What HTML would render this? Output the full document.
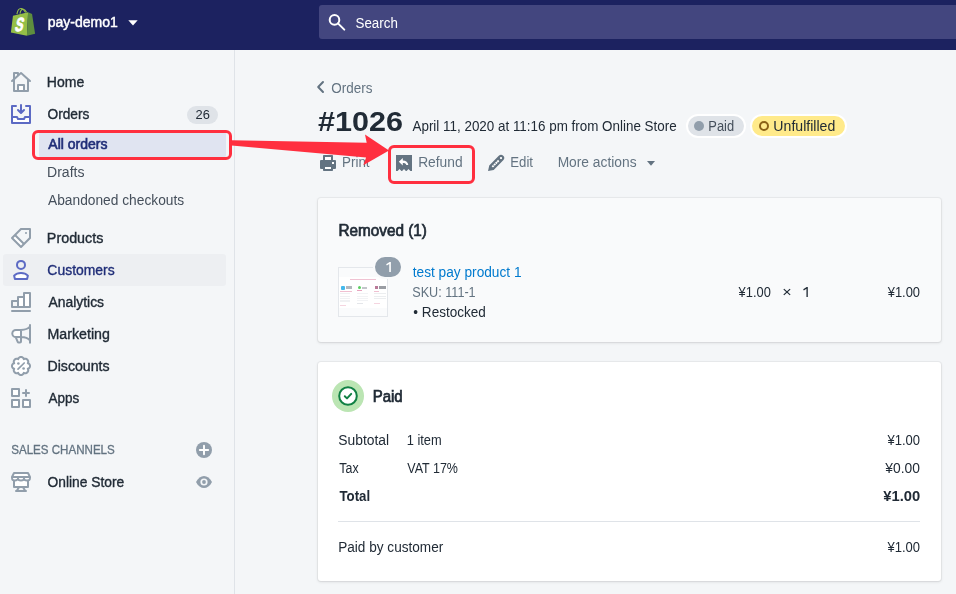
<!DOCTYPE html>
<html><head><meta charset="utf-8">
<style>
*{box-sizing:border-box;margin:0;padding:0}
html,body{width:956px;height:594px;overflow:hidden;background:#f4f6f8;font-family:"Liberation Sans",sans-serif;color:#212b36}
.a{position:absolute}
#top{position:absolute;left:0;top:0;width:956px;height:49.5px;background:#1c2260}
#search{position:absolute;left:319px;top:5px;width:660px;height:34px;background:#43467f;border-radius:3px}
#sideline{position:absolute;left:234px;top:50px;width:1px;height:544px;background:#dfe3e8}
.t{position:absolute;white-space:nowrap;line-height:1;transform-origin:0 0}
.card{position:absolute;left:318px;width:623px;background:#fff;border-radius:3px;box-shadow:0 0 0 1px rgba(63,63,68,.05),0 1px 3px 0 rgba(63,63,68,.15)}
svg{position:absolute;overflow:visible}
.ic{width:20px;height:20px;left:11px}
</style></head><body>
<div id="top"><div id="search"></div></div>
<div id="sideline"></div>

<!-- shopify bag -->
<svg class="a" style="left:0;top:0" width="50" height="50" viewBox="0 0 50 50">
 <path d="M16.9 14.2 C17.6 10.2 19.6 8.3 21.4 8.6 C23.2 8.9 24.6 10.6 25.6 12.4" fill="none" stroke="#95bf47" stroke-width="1.1"/>
 <path d="M20.0 13.6 C20.4 10.6 21.8 8.9 23.4 9.2 C24.8 9.5 25.8 10.8 26.6 12.2" fill="none" stroke="#95bf47" stroke-width="1.1"/>
 <path d="M12.97 15.8 L28.1 12.2 L26.9 35.8 L10.85 32.5 Z" fill="#95bf47"/>
 <path d="M28.1 12.2 L32.06 14 L35.1 33.7 L26.9 35.8 Z" fill="#5e8e3e"/>
 <text x="0" y="0" font-family="Liberation Sans, sans-serif" font-weight="700" font-size="19" fill="#fff" stroke="#fff" stroke-width="0.9" transform="translate(14.200 31.400) skewX(-13) scale(0.640 1)">S</text>
</svg>
<!-- store caret -->
<svg class="a" style="left:128px;top:19.5px" width="10" height="6" viewBox="0 0 10 6"><path d="M0.3 0.3h9.4L5 5.6z" fill="#fff"/></svg>
<!-- search icon -->
<svg class="a" style="left:326px;top:11px" width="22" height="22" viewBox="0 0 22 22"><circle cx="8.5" cy="8.9" r="4.8" fill="none" stroke="#fff" stroke-width="2"/><path d="M12 12.4 L18.3 18.6" stroke="#fff" stroke-width="2" stroke-linecap="round"/></svg>

<!-- nav backgrounds -->
<div class="a" style="left:39px;top:130px;width:187px;height:28px;background:#e0e4f1;border-radius:3px"></div>
<div class="a" style="left:3px;top:254px;width:223px;height:32px;background:#edeff2;border-radius:3px"></div>
<div class="a" style="left:187px;top:106px;width:31px;height:18px;background:#dfe3e8;border-radius:9px"></div>

<!-- NAV ICONS -->
<svg class="ic" style="top:72px" viewBox="0 0 20 20"><path fill="#fff" d="M8 14h4v4H8z"/><path fill="#919eab" fill-rule="evenodd" d="M19.664 8.252l-9-8a1 1 0 0 0-1.328 0L8 1.44V1a1 1 0 0 0-1-1H3a1 1 0 0 0-1 1v5.773L.336 8.252a1.001 1.001 0 0 0 1.328 1.496L2 9.449V19a1 1 0 0 0 1 1h14a1 1 0 0 0 1-1V9.449l.336.299a.997.997 0 0 0 1.411-.083 1.001 1.001 0 0 0-.083-1.413zM16 18h-2v-5a1 1 0 0 0-1-1H7a1 1 0 0 0-1 1v5H4V7.671l6-5.333 6 5.333V18zm-8 0v-4h4v4H8zM4 2h2v1.218L4 4.996V2z"/></svg>

<svg class="ic" style="top:104px" viewBox="0 0 20 20"><path fill="#fff" d="M2 18v-4h3.382l.723 1.447c.17.339.516.553.895.553h6c.379 0 .725-.214.895-.553L14.618 14H18v4H2z"/><path fill="#5c6ac4" fill-rule="evenodd" d="M2 18v-4h3.382l.723 1.447c.17.339.516.553.895.553h6c.379 0 .725-.214.895-.553L14.618 14H18v4H2zM19 1a1 1 0 0 1 1 1v17a1 1 0 0 1-1 1H1a1 1 0 0 1-1-1V2a1 1 0 0 1 1-1h4a1 1 0 0 1 0 2H2v9h4c.379 0 .725.214.895.553L7.618 14h4.764l.723-1.447c.17-.339.516-.553.895-.553h4V3h-3a1 1 0 0 1 0-2h4zM6.293 6.707a.999.999 0 1 1 1.414-1.414L9 6.586V1a1 1 0 0 1 2 0v5.586l1.293-1.293a.999.999 0 1 1 1.414 1.414l-3 3a.997.997 0 0 1-1.414 0l-3-3z"/></svg>

<svg class="ic" style="top:228px" viewBox="0 0 20 20"><path fill="#fff" d="M10 17.586L2.414 10 4 8.414 11.586 16z"/><path fill="#919eab" fill-rule="evenodd" d="M19 0h-9c-.265 0-.52.106-.707.293l-9 9a.999.999 0 0 0 0 1.414l9 9a.997.997 0 0 0 1.414 0l9-9A.997.997 0 0 0 20 10V1a1 1 0 0 0-1-1zm-9 17.586L2.414 10 4 8.414 11.586 16 10 17.586zm8-8l-5 5L5.414 7l5-5H18v7.586zM15 6a1 1 0 1 0 0-2 1 1 0 0 0 0 2"/></svg>

<svg class="ic" style="top:260px" viewBox="0 0 20 20"><circle cx="10" cy="4.9" r="4" fill="none" stroke="#5c6ac4" stroke-width="2"/><path d="M3.1 15.6 C4.6 14.1 7 13 10 13 C13 13 15.4 14.1 16.9 15.6 L16.1 19 H3.9 Z" fill="#fff" stroke="#5c6ac4" stroke-width="2" stroke-linejoin="round"/></svg>

<svg class="ic" style="top:292px" viewBox="0 0 20 20"><path d="M7 5h6v10H7z M13 1h6v14h-6z" fill="#fff"/><path d="M1 9h6v6H1z M7 5h6v10H7z M13 1h6v14h-6z" fill="none" stroke="#919eab" stroke-width="2" stroke-linejoin="round"/><rect x="0" y="18" width="20" height="2" rx="1" fill="#919eab"/></svg>

<svg class="ic" style="top:324px" viewBox="0 0 20 20"><path d="M10 5.9 H4.9 a3.6 3.6 0 0 0 0 7.200 H10 z" fill="#fff"/><path d="M19 1 V18.800 M19 2.500 C17.500 4.400 14 5.900 10 5.900 H4.900 a3.600 3.600 0 0 0 0 7.200 H10 C14 13.100 17.500 14.600 19 16.500 M10 5.900 V17.400 a1 1 0 0 1 -1 1 H7.600 a1 1 0 0 1 -0.900 -0.600 L4.700 13.100" fill="none" stroke="#919eab" stroke-width="2" stroke-linecap="round" stroke-linejoin="round"/></svg>

<svg class="ic" style="top:356px" viewBox="0 0 20 20"><path d="M10.00 1.00 L10.59 1.06 L11.15 1.23 L11.69 1.52 L12.17 1.92 L12.57 2.43 L12.81 3.21 L13.53 2.83 L14.18 2.76 L14.80 2.81 L15.38 2.99 L15.91 3.26 L16.36 3.64 L16.74 4.09 L17.01 4.62 L17.19 5.20 L17.24 5.82 L17.17 6.47 L16.79 7.19 L17.57 7.43 L18.08 7.83 L18.48 8.31 L18.77 8.85 L18.94 9.41 L19.00 10.00 L18.94 10.59 L18.77 11.15 L18.48 11.69 L18.08 12.17 L17.57 12.57 L16.79 12.81 L17.17 13.53 L17.24 14.18 L17.19 14.80 L17.01 15.38 L16.74 15.91 L16.36 16.36 L15.91 16.74 L15.38 17.01 L14.80 17.19 L14.18 17.24 L13.53 17.17 L12.81 16.79 L12.57 17.57 L12.17 18.08 L11.69 18.48 L11.15 18.77 L10.59 18.94 L10.00 19.00 L9.41 18.94 L8.85 18.77 L8.31 18.48 L7.83 18.08 L7.43 17.57 L7.19 16.79 L6.47 17.17 L5.82 17.24 L5.20 17.19 L4.62 17.01 L4.09 16.74 L3.64 16.36 L3.26 15.91 L2.99 15.38 L2.81 14.80 L2.76 14.18 L2.83 13.53 L3.21 12.81 L2.43 12.57 L1.92 12.17 L1.52 11.69 L1.23 11.15 L1.06 10.59 L1.00 10.00 L1.06 9.41 L1.23 8.85 L1.52 8.31 L1.92 7.83 L2.43 7.43 L3.21 7.19 L2.83 6.47 L2.76 5.82 L2.81 5.20 L2.99 4.62 L3.26 4.09 L3.64 3.64 L4.09 3.26 L4.62 2.99 L5.20 2.81 L5.82 2.76 L6.47 2.83 L7.19 3.21 L7.43 2.43 L7.83 1.92 L8.31 1.52 L8.85 1.23 L9.41 1.06Z" fill="#fff" stroke="#919eab" stroke-width="2" stroke-linejoin="round"/><path d="M7 13.200 L13.200 7" stroke="#919eab" stroke-width="1.700" stroke-linecap="round"/><circle cx="7.400" cy="7.500" r="1.300" fill="#919eab"/><circle cx="12.600" cy="12.500" r="1.300" fill="#919eab"/></svg>

<svg class="ic" style="top:388px" viewBox="0 0 20 20"><path d="M1 1h7v7H1z M1 12h7v7H1z M12 12h7v7h-7z" fill="#fff" stroke="#919eab" stroke-width="2" stroke-linejoin="round"/><path d="M12 5 H18 M15 2 V8" stroke="#919eab" stroke-width="2" stroke-linecap="round"/></svg>

<svg class="ic" style="top:472px" viewBox="0 0 20 20"><path d="M4 9H16V14H4Z" fill="#fff"/><path d="M3 8.500V15H17V8.500M7.800 15.500L6 18.500M12.200 15.500L14 18.500" fill="none" stroke="#919eab" stroke-width="2" stroke-linejoin="round"/><path d="M1 5V6.200a3 2.300 0 0 0 6 0a3 2.300 0 0 0 6 0a3 2.300 0 0 0 6 0V5" fill="#fff" stroke="#919eab" stroke-width="1.800" stroke-linejoin="round"/><path d="M3 1H17L19 5H1Z" fill="#fff" stroke="#919eab" stroke-width="2" stroke-linejoin="round"/><rect x="4" y="18" width="12" height="2" rx="1" fill="#919eab"/></svg>

<!-- plus circle & eye -->
<svg class="a" style="left:196px;top:442px" width="16" height="16" viewBox="0 0 16 16"><circle cx="8" cy="8" r="8" fill="#919eab"/><path d="M8 3.800v8.400M3.800 8h8.400" stroke="#fff" stroke-width="1.900" stroke-linecap="round"/></svg>
<svg class="a" style="left:196px;top:476px" width="16" height="12" viewBox="0 0 16 12"><path d="M0 6 C2 2 5 0 8 0 C11 0 14 2 16 6 C14 10 11 12 8 12 C5 12 2 10 0 6 Z" fill="#919eab"/><circle cx="8" cy="6" r="3.600" fill="#f4f6f8"/><circle cx="8" cy="6" r="1.900" fill="#919eab"/></svg>

<!-- breadcrumb chevron -->
<svg class="a" style="left:315px;top:80px" width="12" height="14" viewBox="0 0 12 14"><path d="M8 2 L3.200 7 L8 12" fill="none" stroke="#637381" stroke-width="2" stroke-linecap="round" stroke-linejoin="round"/></svg>

<!-- badges -->
<div class="a" style="left:685.500px;top:114px;width:60px;height:24px;border-radius:12px;background:#dfe3e8;border:2px solid #fff"></div>
<div class="a" style="left:694px;top:121px;width:10px;height:10px;border-radius:5px;background:#919eab"></div>
<div class="a" style="left:750px;top:114px;width:97px;height:24px;border-radius:12px;background:#ffea8a;border:2px solid #fff"></div>
<div class="a" style="left:758.500px;top:121px;width:10px;height:10px;border-radius:5px;border:2px solid #8a6116"></div>

<!-- action icons -->
<svg class="a" style="left:318px;top:153px" width="20" height="20" viewBox="0 0 20 20"><path fill="#fff" d="M7 4h6v3H7zM7 14h6v2H7zM14 9h2v2h-2z"/><path fill="#637381" fill-rule="evenodd" d="M15 7h2a1 1 0 0 1 1 1v7a1 1 0 0 1-1 1h-2v1.200a.800.800 0 0 1-.800.800H5.800a.800.800 0 0 1-.800-.800V16H3a1 1 0 0 1-1-1V8a1 1 0 0 1 1-1h2V2.800a.800.800 0 0 1 .800-.800h8.400a.800.800 0 0 1 .800.800ZM7 4h6v3H7zM7 14h6v2H7zM14 9h2v2h-2z"/></svg>

<svg class="a" style="left:394px;top:153px" width="20" height="20" viewBox="0 0 20 20"><path fill="#637381" d="M2 2H18V18H16.400L14.500 16.100L12.600 18H11.900L10 16.100L8.100 18H7.400L5.500 16.100L3.600 18H2Z"/><path fill="#fff" d="M8.800 5 L4.800 8.800 L8.800 12.600 V10.100 C10.800 10.100 12 10.600 12.300 12 H14.300 C14.100 9.300 12 7.600 8.800 7.500 Z"/></svg>

<svg class="a" style="left:486px;top:153px" width="20" height="20" viewBox="0 0 20 20"><path d="M2.040 17.900 L3.250 12.550 L12.770 2.870 A3.150 3.150 0 0 1 17.230 7.330 L7.700 16.900 Z" fill="#637381"/><path d="M6.300 13.900 L12.700 7.500" stroke="#fff" stroke-width="1.900" stroke-dasharray="1.900 0.500"/><circle cx="15" cy="5.080" r="1.150" fill="#fff"/></svg>

<svg class="a" style="left:647px;top:161px" width="8" height="5" viewBox="0 0 8 5"><path d="M0 0h8L4 4.700z" fill="#637381"/></svg>

<!-- cards -->
<div class="card" style="top:198px;height:144px;background:#f9fafb"></div>
<div class="card" style="top:362px;height:219px"></div>

<!-- thumbnail -->
<div class="a" style="left:338px;top:267px;width:50px;height:50px;border:1px solid #e4e7eb;background:#fafbfc"></div>
<div class="a" style="left:339px;top:277px;width:48px;height:31px;background:#fff"></div>
<div class="a" style="left:350px;top:279px;width:26px;height:1px;background:#f0c3d3"></div>
<div class="a" style="left:340.500px;top:285.500px;width:4px;height:4px;background:#45b9ec;border-radius:1px"></div>
<div class="a" style="left:345.500px;top:286px;width:6.500px;height:3px;background:#b4b8be"></div>
<div class="a" style="left:358px;top:286px;width:3px;height:3px;background:#5bcf61;border-radius:1.500px"></div>
<div class="a" style="left:362px;top:286.500px;width:5px;height:2px;background:#c3c6ca"></div>
<div class="a" style="left:374.500px;top:286px;width:3px;height:3px;background:#b97a98"></div>
<div class="a" style="left:378.500px;top:286px;width:7.500px;height:2.500px;background:#9a9da3"></div>
<div class="a" style="left:340px;top:291px;width:12px;height:1px;background:#f0c0d1"></div>
<div class="a" style="left:357px;top:290px;width:5px;height:1px;background:#e8a4be"></div>
<div class="a" style="left:374px;top:291px;width:4.500px;height:1px;background:#f0c0d1"></div>
<div class="a" style="left:340px;top:293px;width:10px;height:9px;background:repeating-linear-gradient(#f0f1f3 0 1px,#fff 1px 2.500px)"></div>
<div class="a" style="left:357px;top:292.500px;width:11px;height:8px;background:repeating-linear-gradient(#f2f3f5 0 1px,#fff 1px 2.500px)"></div>
<div class="a" style="left:374px;top:293px;width:12px;height:7px;background:repeating-linear-gradient(#eceef0 0 1px,#fff 1px 2.500px)"></div>
<div class="a" style="left:340px;top:304.500px;width:6px;height:1px;background:#f5d5e0"></div>
<div class="a" style="left:357px;top:302.500px;width:6px;height:1px;background:#e4e6ea"></div>
<div class="a" style="left:374px;top:303px;width:6px;height:1px;background:#f5d5e0"></div>
<!-- qty badge -->
<div class="a" style="left:373px;top:255px;width:30px;height:24px;border-radius:12px;background:#919eab;border:2px solid #f9fafb"></div>

<!-- paid circle -->
<div class="a" style="left:332px;top:379.500px;width:32px;height:32px;border-radius:16px;background:#bbe5b3"></div>
<svg class="a" style="left:338px;top:385.500px" width="20" height="20" viewBox="0 0 20 20"><circle cx="10" cy="10" r="8.800" fill="#fff" stroke="#108043" stroke-width="2"/><path d="M6.800 10.300 L9 12.400 L13.200 7.900" fill="none" stroke="#108043" stroke-width="2" stroke-linecap="round" stroke-linejoin="round"/></svg>

<!-- divider -->
<div class="a" style="left:338px;top:521px;width:582px;height:1px;background:#dfe3e8"></div>

<svg class="a" style="left:803.300px;top:287px" width="5" height="10" viewBox="0 0 4.600 10"><path d="M4.600 0V10H3.250V1.750L0.600 3.400L0 2.300L3.500 0Z" fill="#212b36"/></svg>
<svg class="a" style="left:385.900px;top:262px" width="5" height="10" viewBox="0 0 4.700 10"><path d="M4.700 0V10H3.100V2L0.650 3.500L0 2.250L3.400 0Z" fill="#fff"/></svg>
<div style="position:absolute;left:0;top:0;width:956px;height:594px;will-change:transform">
<div class="t" style="left:47px;top:15px;font-size:14px;font-weight:400;color:#ffffff;transform:matrix(1.0000,0,0,1,0.75,0);-webkit-text-stroke:0.45px #ffffff;">pay-demo1</div>
<div class="t" style="left:354px;top:16px;font-size:14px;font-weight:400;color:#ffffff;transform:matrix(0.9540,0,0,1,1.53,0);">Search</div>
<div class="t" style="left:46px;top:75px;font-size:14px;font-weight:400;color:#212b36;transform:matrix(1.0010,0,0,1,0.85,0);-webkit-text-stroke:0.35px #212b36;">Home</div>
<div class="t" style="left:47px;top:107px;font-size:14px;font-weight:400;color:#212b36;transform:matrix(0.9798,0,0,1,0.50,0);-webkit-text-stroke:0.35px #212b36;">Orders</div>
<div class="t" style="left:47px;top:137px;font-size:14px;font-weight:400;color:#202e78;transform:matrix(1.0006,0,0,1,1.35,0);-webkit-text-stroke:0.6px #202e78;">All orders</div>
<div class="t" style="left:46px;top:165px;font-size:14px;font-weight:400;color:#454f5b;transform:matrix(1.0039,0,0,1,0.99,0);">Drafts</div>
<div class="t" style="left:47px;top:193px;font-size:14px;font-weight:400;color:#454f5b;transform:matrix(0.9829,0,0,1,1.00,0);">Abandoned checkouts</div>
<div class="t" style="left:46px;top:231px;font-size:14px;font-weight:400;color:#212b36;transform:matrix(1.0236,0,0,1,0.84,0);-webkit-text-stroke:0.35px #212b36;">Products</div>
<div class="t" style="left:47px;top:263px;font-size:14px;font-weight:400;color:#202e78;transform:matrix(0.9946,0,0,1,0.37,0);-webkit-text-stroke:0.35px #202e78;">Customers</div>
<div class="t" style="left:47px;top:295px;font-size:14px;font-weight:400;color:#212b36;transform:matrix(0.9913,0,0,1,1.49,0);-webkit-text-stroke:0.35px #212b36;">Analytics</div>
<div class="t" style="left:46px;top:327px;font-size:14px;font-weight:400;color:#212b36;transform:matrix(1.0149,0,0,1,1.47,0);-webkit-text-stroke:0.35px #212b36;">Marketing</div>
<div class="t" style="left:46px;top:359px;font-size:14px;font-weight:400;color:#212b36;transform:matrix(1.0103,0,0,1,1.49,0);-webkit-text-stroke:0.35px #212b36;">Discounts</div>
<div class="t" style="left:47px;top:391px;font-size:14px;font-weight:400;color:#212b36;transform:matrix(0.9616,0,0,1,1.61,0);-webkit-text-stroke:0.35px #212b36;">Apps</div>
<div class="t" style="left:11px;top:444px;font-size:12px;font-weight:400;color:#637381;transform:matrix(0.9638,0,0,1,0.25,0);-webkit-text-stroke:0.3px #637381;">SALES CHANNELS</div>
<div class="t" style="left:47px;top:475px;font-size:14px;font-weight:400;color:#212b36;transform:matrix(0.9857,0,0,1,0.50,0);-webkit-text-stroke:0.35px #212b36;">Online Store</div>
<div class="t" style="left:195px;top:108px;font-size:13px;font-weight:400;color:#212b36;transform:matrix(0.9916,0,0,1,0.50,0);">26</div>
<div class="t" style="left:331px;top:81px;font-size:14px;font-weight:400;color:#637381;transform:matrix(0.9623,0,0,1,0.25,0);">Orders</div>
<div class="t" style="left:318px;top:108px;font-size:28px;font-weight:700;color:#212b36;transform:matrix(1.0910,0,0,1,0.12,0);">#1026</div>
<div class="t" style="left:412px;top:119px;font-size:14px;font-weight:400;color:#212b36;transform:matrix(0.9579,0,0,1,0.50,0);">April 11, 2020 at 11:16 pm from Online Store</div>
<div class="t" style="left:707px;top:119px;font-size:14px;font-weight:400;color:#454f5b;transform:matrix(0.9215,0,0,1,1.32,0);">Paid</div>
<div class="t" style="left:772px;top:119px;font-size:14px;font-weight:400;color:#212b36;transform:matrix(1.0063,0,0,1,1.37,0);">Unfulfilled</div>
<div class="t" style="left:341px;top:155px;font-size:14px;font-weight:400;color:#637381;transform:matrix(0.9563,0,0,1,1.02,0);">Print</div>
<div class="t" style="left:417px;top:155px;font-size:14px;font-weight:400;color:#637381;transform:matrix(0.9858,0,0,1,1.14,0);">Refund</div>
<div class="t" style="left:509px;top:155px;font-size:14px;font-weight:400;color:#637381;transform:matrix(0.9423,0,0,1,1.29,0);">Edit</div>
<div class="t" style="left:557px;top:155px;font-size:14px;font-weight:400;color:#637381;transform:matrix(0.9844,0,0,1,0.63,0);">More actions</div>
<div class="t" style="left:337px;top:223px;font-size:16px;font-weight:400;color:#212b36;transform:matrix(0.9563,0,0,1,1.53,0);-webkit-text-stroke:0.7px #212b36;">Removed (1)</div>
<div class="t" style="left:412px;top:265px;font-size:14px;font-weight:400;color:#007ace;transform:matrix(0.9775,0,0,1,0.75,0);">test pay product 1</div>
<div class="t" style="left:411px;top:285px;font-size:14px;font-weight:400;color:#637381;transform:matrix(0.9023,0,0,1,1.21,0);">SKU: 111-1</div>
<div class="t" style="left:413px;top:305px;font-size:14px;font-weight:400;color:#212b36;transform:matrix(0.9668,0,0,1,0.37,0);">• Restocked</div>
<div class="t" style="left:738px;top:285px;font-size:14px;font-weight:400;color:#212b36;transform:matrix(0.9181,0,0,1,0.62,0);">¥1.00</div>
<div class="t" style="left:782px;top:285px;font-size:14px;font-weight:400;color:#212b36;transform:matrix(1.1500,0,0,1,0.27,0);">×</div>
<div class="t" style="left:887px;top:285px;font-size:14px;font-weight:400;color:#212b36;transform:matrix(0.9217,0,0,1,0.74,0);">¥1.00</div>
<div class="t" style="left:371px;top:389px;font-size:16px;font-weight:400;color:#212b36;transform:matrix(0.9361,0,0,1,1.67,0);-webkit-text-stroke:0.7px #212b36;">Paid</div>
<div class="t" style="left:337px;top:433px;font-size:14px;font-weight:400;color:#212b36;transform:matrix(0.9901,0,0,1,1.25,0);">Subtotal</div>
<div class="t" style="left:406px;top:433px;font-size:14px;font-weight:400;color:#212b36;transform:matrix(0.9159,0,0,1,0.70,0);">1 item</div>
<div class="t" style="left:339px;top:461px;font-size:14px;font-weight:400;color:#212b36;transform:matrix(0.8866,0,0,1,0.37,0);">Tax</div>
<div class="t" style="left:407px;top:461px;font-size:14px;font-weight:400;color:#212b36;transform:matrix(0.8927,0,0,1,0.25,0);">VAT 17%</div>
<div class="t" style="left:339px;top:489px;font-size:14px;font-weight:700;color:#212b36;transform:matrix(0.9458,0,0,1,0.49,0);">Total</div>
<div class="t" style="left:886px;top:433px;font-size:14px;font-weight:400;color:#212b36;transform:matrix(0.9289,0,0,1,1.49,0);">¥1.00</div>
<div class="t" style="left:884px;top:461px;font-size:14px;font-weight:400;color:#212b36;transform:matrix(0.9895,0,0,1,1.25,0);">¥0.00</div>
<div class="t" style="left:883px;top:489px;font-size:14px;font-weight:700;color:#212b36;transform:matrix(1.0537,0,0,1,0.25,0);">¥1.00</div>
<div class="t" style="left:337px;top:540px;font-size:14px;font-weight:400;color:#212b36;transform:matrix(0.9721,0,0,1,1.15,0);">Paid by customer</div>
<div class="t" style="left:886px;top:540px;font-size:14px;font-weight:400;color:#212b36;transform:matrix(0.9289,0,0,1,1.49,0);">¥1.00</div>
</div>
<!-- red annotations -->
<div class="a" style="left:32px;top:129.500px;width:200px;height:30.500px;border:3px solid #ff2f3f;border-radius:6px"></div>
<div class="a" style="left:388px;top:144.500px;width:87px;height:39.500px;border:3px solid #ff2f3f;border-radius:6px"></div>
<svg class="a" style="left:0;top:0" width="956" height="594" viewBox="0 0 956 594"><path d="M231.500 140.200 L366.700 142.700 L365 134.500 L389 150.600 L363.300 165.300 L366.100 157.400 L231.500 145.400 Z" fill="#ff2f3f"/></svg>


</body></html>
